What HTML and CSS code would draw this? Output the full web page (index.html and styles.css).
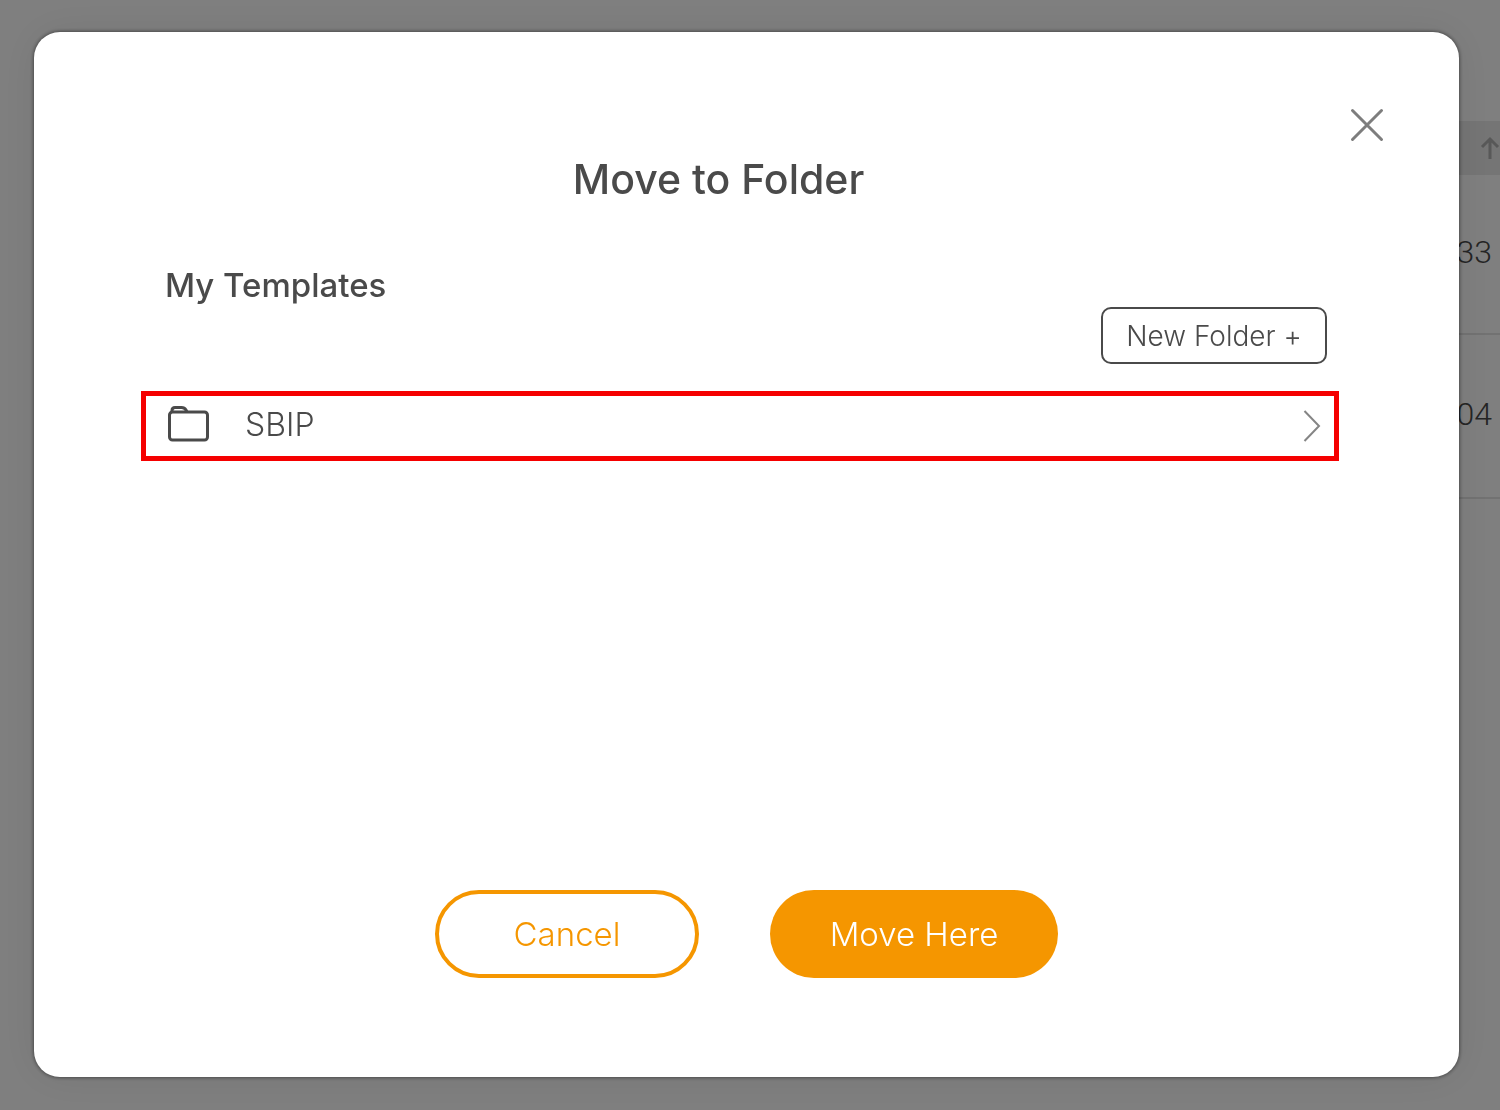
FILE: index.html
```html
<!DOCTYPE html>
<html lang="en">
<head>
<meta charset="utf-8">
<meta name="viewport" content="width=device-width, initial-scale=1">
<title>Move to Folder</title>
<link rel="stylesheet" href="styles.css">
</head>
<body>
<main class="page">
  <table class="list">
    <thead>
      <tr>
        <th scope="col" aria-label="Sorted ascending">
          <svg class="sort-icon" viewBox="0 0 20 24" aria-hidden="true"><path d="M10 23V3M2 11l8-8 8 8"/></svg>
        </th>
      </tr>
    </thead>
    <tbody>
      <tr><td>33</td></tr>
      <tr><td>04</td></tr>
    </tbody>
  </table>
</main>

<div class="overlay">
  <section class="dialog" role="dialog" aria-modal="true" aria-labelledby="dialog-title">
    <header class="dialog-header">
      <h1 class="dialog-title" id="dialog-title">Move to Folder</h1>
      <button class="close" type="button" aria-label="Close">
        <svg viewBox="0 0 34 34" aria-hidden="true"><path d="M2.500 2.500l29 29M31.500 2.500l-29 29"/></svg>
      </button>
    </header>

    <div class="dialog-body">
      <h2 class="section-title">My Templates</h2>
      <div class="toolbar">
        <button class="new-folder" type="button">New Folder +</button>
      </div>
      <button class="folder" type="button">
        <svg class="folder-icon" viewBox="0 0 42 36" aria-hidden="true">
          <rect x="2.500" y="6" width="38" height="28" rx="3"/>
          <path d="M5 6V4.500Q5 1.500 8 1.500H14.500Q17.500 1.500 19 4L20 6"/>
        </svg>
        <span class="folder-name">SBIP</span>
        <svg class="chevron" viewBox="0 0 18 34" aria-hidden="true"><path d="M1.500 4L16 19 1.500 34"/></svg>
      </button>
    </div>

    <footer class="dialog-footer">
      <button class="action cancel" type="button">Cancel</button>
      <button class="action confirm" type="button">Move Here</button>
    </footer>
  </section>
</div>
</body>
</html>
```

FILE: styles.css
```css
* {
  box-sizing: border-box;
}

body {
  margin: 0;
  min-height: 100vh;
  background: #fff;
  color: #4a4a4a;
  font-family: Inter, "Liberation Sans", sans-serif;
}

button {
  margin: 0;
  padding: 0;
  border: 0;
  background: none;
  color: inherit;
  font: inherit;
  cursor: pointer;
}

svg {
  display: block;
  fill: none;
  stroke: currentColor;
}

/* Template list behind the dialog */
.page {
  padding: 121px 0 0 64px;
  overflow: hidden;
}

.list {
  width: 100%;
  border-collapse: separate;
  border-spacing: 0;
  font-family: Roboto, "Liberation Sans", sans-serif;
  font-size: 32px;
  font-weight: 300;
  text-align: right;
}

.list th {
  height: 54px;
  padding: 0;
  background: #eaeaea;
  color: #b0b0b0;
}

.sort-icon {
  width: 20px;
  height: 24px;
  margin-left: auto;
  stroke-width: 3;
}

.list td {
  height: 164px;
  padding: 0 8px 4px 0;
  border-bottom: 2px solid #e4e4e4;
}

.list tbody tr:first-child td {
  height: 160px;
}

/* Dialog */
.overlay {
  position: fixed;
  inset: 0;
  display: flex;
  padding: 32px 41px 33px 34px;
  background: rgba(0, 0, 0, 0.5);
  overflow: auto;
}

.dialog {
  flex: 1;
  display: flex;
  flex-direction: column;
  padding: 69px 0 99px;
  border-radius: 26px;
  background: #fff;
  box-shadow: 0 0 4px rgba(0, 0, 0, 0.6), 0 0 40px rgba(0, 0, 0, 0.08);
}

.dialog-header {
  display: grid;
  grid-template-columns: 1fr 48px;
  align-items: start;
  padding: 0 68px 0 60px;
}

.dialog-title {
  margin: 50px 0 0;
  font-size: 41px;
  font-weight: 500;
  line-height: 56px;
  text-align: center;
}

.close {
  display: grid;
  place-items: center;
  height: 48px;
  color: #7d7d7d;
}

.close svg {
  width: 34px;
  height: 34px;
  stroke-width: 3;
  stroke-linecap: round;
}

.dialog-body {
  padding: 58px 120px 56px 107px;
}

.section-title {
  margin: 0;
  padding-left: 24px;
  font-size: 33px;
  font-weight: 500;
  line-height: 40px;
}

.toolbar {
  display: flex;
  justify-content: flex-end;
  padding: 2px 12px 27px;
}

.new-folder {
  height: 57px;
  min-width: 226px;
  border: 2px solid #4a4a4a;
  border-radius: 10px;
  font-size: 28px;
  font-weight: 300;
}

.folder {
  display: flex;
  align-items: center;
  width: 100%;
  height: 70px;
  padding: 0 13px 4px 21px;
  border: 5px solid #f50000;
  text-align: left;
}

.folder-icon {
  width: 42px;
  height: 36px;
  stroke-width: 3;
}

.folder-name {
  flex: 1;
  padding-left: 36px;
  font-size: 32px;
  font-weight: 300;
}

.chevron {
  width: 18px;
  height: 34px;
  overflow: visible;
  color: #858585;
  stroke-width: 2;
}

.dialog-footer {
  display: flex;
  justify-content: center;
  gap: 71px;
  margin-top: auto;
}

.action {
  height: 88px;
  border-radius: 44px;
  font-size: 33px;
  font-weight: 300;
}

.cancel {
  min-width: 264px;
  border: 4px solid #f59600;
  color: #f59600;
}

.confirm {
  min-width: 288px;
  background: #f59600;
  color: #fff;
}
```
